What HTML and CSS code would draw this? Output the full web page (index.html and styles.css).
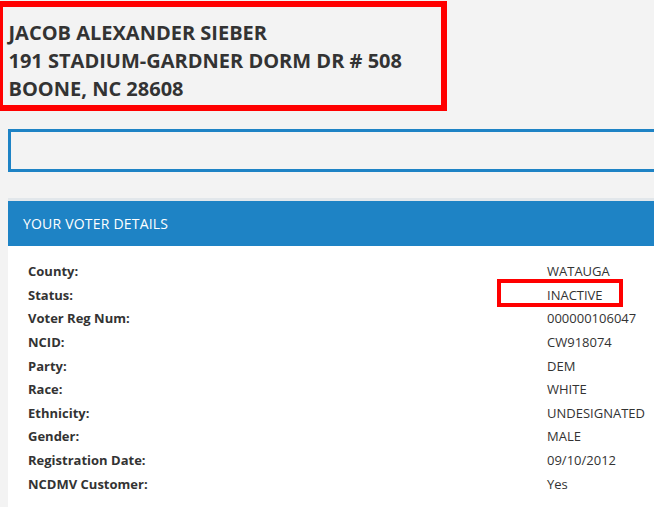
FILE: index.html
```html
<!DOCTYPE html>
<html>
<head>
<meta charset="utf-8">
<link rel="stylesheet" href="styles.css">
</head>
<body>
<div class="address">
  <div>JACOB ALEXANDER SIEBER</div>
  <div>191 STADIUM-GARDNER DORM DR # 508</div>
  <div>BOONE, NC 28608</div>
</div>
<div class="search-box"></div>
<section class="panel">
  <div class="panel-head">YOUR VOTER DETAILS</div>
  <div class="panel-body">
    <dl class="details">
      <dt>County:</dt><dd>WATAUGA</dd>
      <dt>Status:</dt><dd><span class="flagged">INACTIVE</span></dd>
      <dt>Voter Reg Num:</dt><dd>000000106047</dd>
      <dt>NCID:</dt><dd>CW918074</dd>
      <dt>Party:</dt><dd>DEM</dd>
      <dt>Race:</dt><dd>WHITE</dd>
      <dt>Ethnicity:</dt><dd>UNDESIGNATED</dd>
      <dt>Gender:</dt><dd>MALE</dd>
      <dt>Registration Date:</dt><dd>09/10/2012</dd>
      <dt>NCDMV Customer:</dt><dd>Yes</dd>
    </dl>
  </div>
</section>
</body>
</html>
```
FILE: styles.css
```css
html, body {
  margin: 0;
  padding: 0;
  background: #f3f3f3;
  font-family: "Open Sans", "Liberation Sans", sans-serif;
  color: #333;
  overflow: hidden;
}
body {
  width: 654px;
  height: 507px;
}
.address {
  margin: 1px 0 0 -3px;
  width: 432px;
  border: 6px solid #ff0000;
  padding: 11.5px 0 2.5px 5.5px;
  font-size: 20px;
  font-weight: 700;
  line-height: 28px;
  color: #333;
}
.search-box {
  margin: 18px 0 0 8px;
  height: 37px;
  border: 3px solid #1e83c5;
  border-right: none;
}
.panel {
  margin: 26px 0 0 8px;
  border-top: 3px solid #e2e7eb;
}
.panel-head {
  height: 45px;
  background: #1e83c5;
  color: #fff;
  font-size: 14px;
  letter-spacing: 0.2px;
  line-height: 45px;
  padding-left: 15px;
}
.panel-body {
  background: #fff;
  padding: 14px 0 0 20px;
  height: 247px;
}
.details {
  margin: 0;
  display: grid;
  grid-template-columns: 519px 1fr;
  font-size: 13px;
  line-height: 23.62px;
}
.details dt {
  font-weight: 700;
}
.details dd {
  margin: 0;
}
.flagged {
  position: relative;
}
.flagged::after {
  content: "";
  position: absolute;
  left: -50px;
  top: -7px;
  width: 126px;
  height: 28px;
  box-sizing: border-box;
  border: 4px solid #ff0000;
}
```
